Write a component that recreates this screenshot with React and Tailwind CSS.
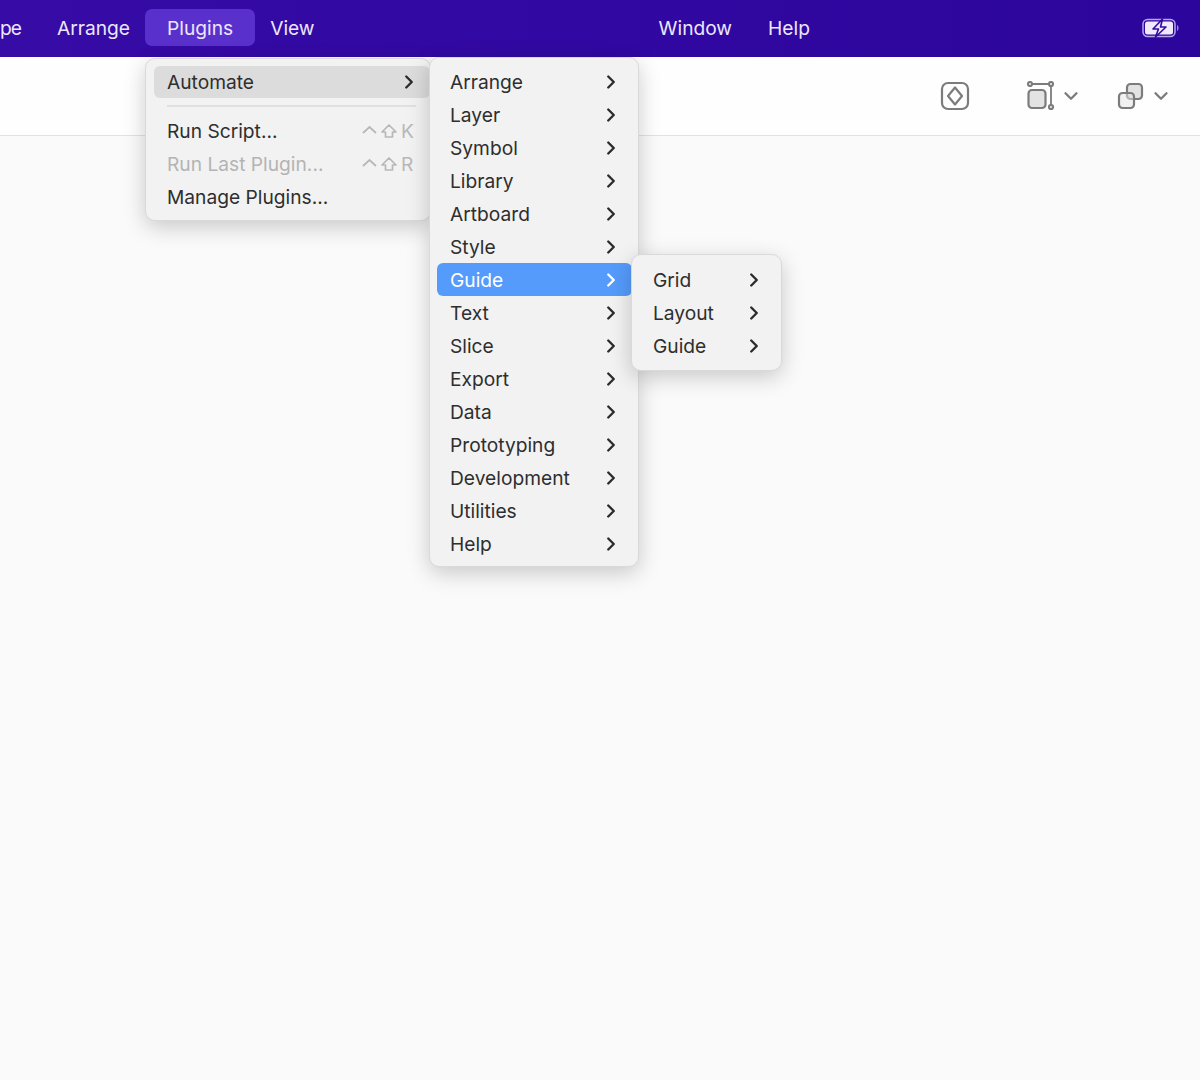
import { ChevronRight, ChevronDown } from "lucide-react"

const automateItems = ["Arrange", "Layer", "Symbol", "Library", "Artboard", "Style", "Guide", "Text", "Slice", "Export", "Data", "Prototyping", "Development", "Utilities", "Help"]
const guideItems = ["Grid", "Layout", "Guide"]

const menuClass = "absolute rounded-[10px] bg-[#f2f2f2] border border-[#d9d9d9] shadow-[0_6px_22px_rgba(0,0,0,0.2)]"

const Arrow = ({ className = "text-[#2b2b2b]" }) => (
    <ChevronRight size={22} strokeWidth={2.6} className={className} />
)

const SubRow = ({ label, active }) => (
    <div className={`flex h-[33px] items-center justify-between rounded-[6px] pl-[13px] pr-[10px] ${active ? "bg-[#559bfb] text-white" : "text-[#2e2e2e]"}`}>
        <span className="pt-[2px]">{label}</span>
        <Arrow className={active ? "text-white" : "text-[#2b2b2b]"} />
    </div>
)

const Shortcut = ({ letter }) => (
    <div className="flex items-center gap-[2px] text-[#b8b8b8]">
        <svg width="17" height="18" viewBox="0 0 17 18" fill="none" stroke="currentColor" strokeWidth="1.8">
            <path d="M2 11 L8.5 5 L15 11" />
        </svg>
        <svg width="18" height="18" viewBox="0 0 18 18" fill="none" stroke="currentColor" strokeWidth="1.7" strokeLinejoin="round">
            <path d="M9 3 L16 10 H12.5 V15 H5.5 V10 H2 Z" />
        </svg>
        <span className="ml-[1px] w-[12px]">{letter}</span>
    </div>
)

const Battery = () => (
    <svg width="38" height="20" viewBox="0 0 38 20" className="mr-[20px]">
        <rect x="1" y="1.5" width="32" height="17" rx="4.5" fill="none" stroke="#b9a4ee" strokeWidth="1.5" />
        <rect x="3" y="3.5" width="28" height="13" rx="2.5" fill="#efe9fb" />
        <path d="M35 7 C37 7.5 37 12.5 35 13 Z" fill="#9c86e0" />
        <path d="M20.5 1 L11 11 H16.5 L13.5 19 L24 9 H18.5 Z" fill="#efe9fb" stroke="#3209a2" strokeWidth="1.6" strokeLinejoin="round" />
    </svg>
)

const App = () => {
    return (
        <div className="relative h-[1080px] w-[1200px] overflow-hidden bg-[#fafafa] text-[19.2px] font-['Inter','Liberation_Sans',sans-serif]">
            <header className="flex h-[57px] items-center bg-gradient-to-r from-[#360ba6] to-[#2c059c] pb-[2px] text-[#ece6fb]">
                <div className="flex items-center gap-[37px]">
                    <span className="-mr-[1px] pt-[2px] tracking-[-1px]">pe</span>
                    <span className="pt-[2px]">Arrange</span>
                    <span className="-mx-[22px] flex h-[37px] items-center rounded-[7px] bg-[#5a30cc] px-[22px] pt-[2px]">Plugins</span>
                    <span className="pt-[2px]">View</span>
                </div>
                <div className="ml-[344px] flex items-center gap-[36px]">
                    <span className="pt-[2px]">Window</span>
                    <span className="pt-[2px]">Help</span>
                </div>
                <div className="ml-auto flex items-center">
                    <Battery />
                </div>
            </header>

            <div className="flex h-[79px] items-center justify-end border-b border-[#e2e2e2] bg-[#fefefe] pr-[28px] text-[#7c7c7c]">
                <svg width="30" height="30" viewBox="0 0 30 30" fill="none" stroke="currentColor" strokeWidth="2.2" strokeLinejoin="round">
                    <rect x="2" y="2" width="26" height="26" rx="6" />
                    <path d="M15 6.5 L22 15 L15 23.5 L8 15 Z" />
                </svg>
                <svg width="30" height="30" viewBox="0 0 30 30" className="ml-[56px]" fill="none" stroke="currentColor" strokeWidth="2.2">
                    <path d="M5 3 H25 M25 3 V26" strokeWidth="1.8" />
                    <rect x="2.5" y="9" width="17" height="18" rx="3.5" fill="#e3e3e3" />
                    <circle cx="4" cy="3" r="2" fill="#fefefe" />
                    <circle cx="25" cy="3" r="2" fill="#fefefe" />
                    <circle cx="25" cy="26" r="2" fill="#fefefe" />
                </svg>
                <ChevronDown size={22} strokeWidth={2.6} className="ml-[4px]" />
                <svg width="28" height="28" viewBox="0 0 28 28" className="ml-[35px]" fill="none" stroke="currentColor" strokeWidth="2.2">
                    <rect x="10" y="2" width="15" height="15" rx="3.5" fill="#e3e3e3" />
                    <rect x="2" y="11" width="15" height="15" rx="3.5" fill="#e3e3e3" fillOpacity="0.5" />
                </svg>
                <ChevronDown size={22} strokeWidth={2.6} className="ml-[5px]" />
            </div>

            <div className={`${menuClass} left-[145px] top-[58px] w-[286px] pb-[6px] pl-[8px] pt-[7px] text-[#2e2e2e]`}>
                <div className="flex h-[32px] items-center justify-between rounded-[6px] bg-[#dcdcdc] pl-[13px] pr-[10px]">
                    <span>Automate</span>
                    <Arrow />
                </div>
                <div className="my-[7px] ml-[13px] mr-[14px] h-[2px] bg-[#e0e0e0]" />
                <div className="pt-[1px]">
                    <div className="flex h-[33px] items-center justify-between pl-[13px] pr-[17px]">
                        <span>Run Script...</span>
                        <Shortcut letter="K" />
                    </div>
                    <div className="flex h-[33px] items-center justify-between pl-[13px] pr-[17px] text-[#b4b4b4]">
                        <span>Run Last Plugin...</span>
                        <Shortcut letter="R" />
                    </div>
                    <div className="flex h-[33px] items-center pl-[13px]">Manage Plugins...</div>
                </div>
            </div>

            <div className={`${menuClass} left-[429px] top-[57px] w-[210px] pb-[6px] pl-[7px] pr-[6px] pt-[7px]`}>
                {automateItems.map((item) => (
                    <SubRow key={item} label={item} active={item === "Guide"} />
                ))}
            </div>

            <div className={`${menuClass} left-[631px] top-[254px] w-[151px] py-[8px] pl-[8px] pr-[6px]`}>
                {guideItems.map((item) => (
                    <SubRow key={item} label={item} />
                ))}
            </div>
        </div>
    )
}

export default App
